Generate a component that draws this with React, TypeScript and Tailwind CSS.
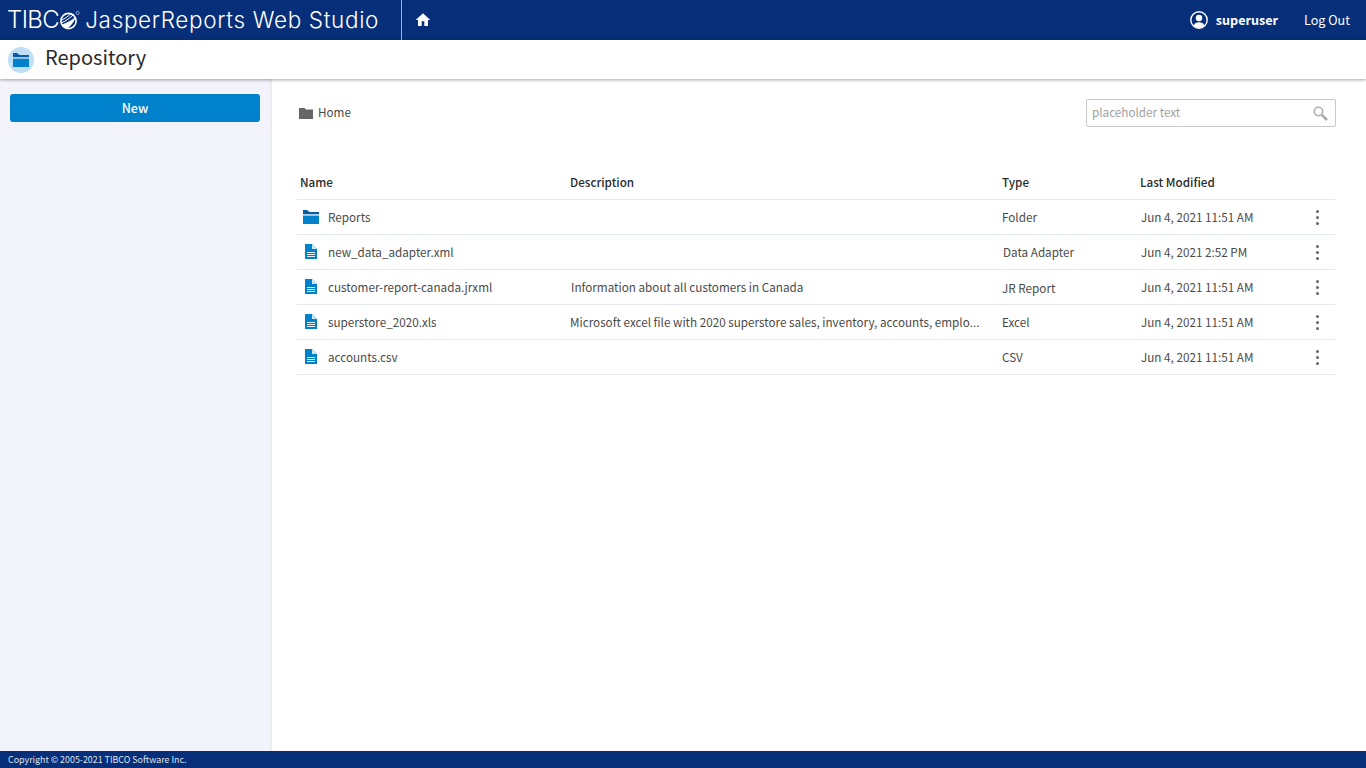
const FONT = "font-['Noto_Sans_CJK_SC','Source_Sans_Pro',sans-serif]";

interface Row {
  name: string;
  description: string;
  type: string;
  modified: string;
  descClass?: string;
  typeClass?: string;
  folder?: boolean;
}

const rows: Row[] = [
  { name: "Reports", description: "", type: "Folder", modified: "Jun 4, 2021 11:51 AM", folder: true },
  { name: "new_data_adapter.xml", description: "", type: "Data Adapter", modified: "Jun 4, 2021 2:52 PM", typeClass: "pl-px" },
  {
    name: "customer-report-canada.jrxml",
    description: "Information about all customers in Canada",
    type: "JR Report",
    modified: "Jun 4, 2021 11:51 AM",
    descClass: "pl-px",
    typeClass: "pt-0.5",
  },
  {
    name: "superstore_2020.xls",
    description: "Microsoft excel file with 2020 superstore sales, inventory, accounts, emplo...",
    type: "Excel",
    modified: "Jun 4, 2021 11:51 AM",
  },
  { name: "accounts.csv", description: "", type: "CSV", modified: "Jun 4, 2021 11:51 AM" },
];

function TibcoBall() {
  return (
    <svg viewBox="0 0 21 20" className="h-5 w-[21px] shrink-0">
      <circle cx="9.5" cy="11" r="7.6" fill="none" stroke="#fff" strokeWidth="1.6" />
      <path d="M9 18 C 13 15, 16 10, 16.6 7 C 13 10, 8 13, 3 14.5 C 4 16.5, 6 18, 9 18z" fill="#fff" />
      <path d="M3 12.5 C 7 11, 11 8, 15 4" stroke="#fff" strokeWidth="1" fill="none" />
      <path d="M2.5 10 C 6 8.5, 9 6.5, 12 3.5" stroke="#fff" strokeWidth="1" fill="none" />
      <circle cx="18.6" cy="3" r="1.6" fill="none" stroke="#fff" strokeWidth="0.5" />
    </svg>
  );
}

function FolderIcon({ className }: { className: string }) {
  return (
    <svg viewBox="0 0 16 14" className={className}>
      <path d="M0 0h4l2.5 2H16v2.4H0z" fill="#0a5aa8" />
      <path d="M0 5.4h16V14H0z" fill="#0081cb" />
      <path d="M0 4.4h16v1H0z" fill="#cfe6f6" />
    </svg>
  );
}

function FileIcon() {
  return (
    <svg viewBox="0 0 12 15" className="h-[15px] w-3">
      <path d="M0 0h7L12 5v10H0z" fill="#0081cb" />
      <path d="M7 0L12 5H7z" fill="#cfe6f6" />
      <path d="M2 8.5h8M2 10.5h8M2 12.5h8" stroke="#fff" strokeWidth="0.9" />
    </svg>
  );
}

function UserIcon() {
  return (
    <svg viewBox="0 0 18 18" className="h-[18px] w-[18px]">
      <circle cx="9" cy="9" r="8.2" fill="none" stroke="#fff" strokeWidth="1.4" />
      <circle cx="9" cy="7" r="3.2" fill="#fff" />
      <path d="M3.6 14.4c.8-2.4 3-3.2 5.4-3.2s4.6.8 5.4 3.2A8 8 0 0 1 9 17a8 8 0 0 1-5.4-2.6z" fill="#fff" />
    </svg>
  );
}

function Kebab() {
  return (
    <div className="flex flex-col items-center gap-[3px] pt-px">
      <span className="h-[3px] w-[3px] rounded-full bg-[#666]" />
      <span className="h-[3px] w-[3px] rounded-full bg-[#666]" />
      <span className="h-[3px] w-[3px] rounded-full bg-[#666]" />
    </div>
  );
}

export default function App() {
  return (
    <div className={`flex h-[768px] w-[1366px] flex-col overflow-hidden bg-white text-[11.7px] text-[#4a4a4a] ${FONT}`}>
      <header className="flex h-10 shrink-0 items-center bg-[#062e79] text-white">
        <div className="flex w-[401px] items-center pl-[7px] font-['Inter',sans-serif] font-light">
          <span className="text-[24px] leading-none tracking-[-0.6px]">TIBC</span>
          <TibcoBall />
          <span className="ml-[5px] text-[22.5px] leading-none tracking-[0.65px] whitespace-nowrap">JasperReports Web Studio</span>
        </div>
        <div className="flex h-10 items-center border-l border-[#9fb0d0] pl-[13px]">
          <svg viewBox="0 0 24 24" className="h-4 w-4" fill="#fff">
            <path d="M10 21v-7h4v7h5.5v-9H23L12 2 1 12h3.5v9z" />
          </svg>
        </div>
        <div className="ml-auto flex items-center pr-4 text-[12.6px]">
          <UserIcon />
          <span className="ml-2 font-bold">superuser</span>
          <span className="ml-[26px]">Log Out</span>
        </div>
      </header>

      <div className="z-10 flex h-[39px] shrink-0 items-center bg-white pl-2 shadow-[0_1px_3px_rgba(0,0,0,0.35)]">
        <div className="flex h-[26px] w-[26px] items-center justify-center rounded-full bg-[#bfdff5]">
          <FolderIcon className="h-[14px] w-4" />
        </div>
        <h1 className="ml-[11px] -translate-y-[3px] text-[20px] leading-none text-[#2b2b2b]">Repository</h1>
      </div>

      <div className="flex min-h-0 flex-1">
        <aside className="w-[272px] shrink-0 border-r-2 border-[#ececee] bg-[#f2f3fb] pt-[15px] pl-[10px]">
          <button className="h-7 w-[250px] rounded-[3px] bg-[#0081cb] text-[12.5px] font-medium text-white">New</button>
        </aside>

        <main className="min-w-0 flex-1 pr-[31px] pl-[25px]">
          <div className="-mr-px flex h-[48px] items-start justify-between pt-5">
            <div className="flex h-7 items-center pl-[2px] text-[#4a4a4a]">
              <svg viewBox="0 0 14 11" className="h-[11px] w-[14px]">
                <path d="M0 0h5.5l1.5 1.5h7V11H0z" fill="#666" />
              </svg>
              <span className="ml-[5px] -translate-y-px">Home</span>
            </div>
            <div className="flex h-7 w-[250px] items-center justify-between rounded-[2px] border border-[#c8c8c8] pr-[7px] pl-[5px] text-[#a0a0a0]">
              <span className="-translate-y-px">placeholder text</span>
              <svg viewBox="0 0 15 15" className="h-[15px] w-[15px]" fill="none" stroke="#aaa">
                <circle cx="5.5" cy="5.5" r="4.2" strokeWidth="1.5" />
                <path d="M8.8 8.8L14 14" strokeWidth="2.6" />
              </svg>
            </div>
          </div>

          <div className="mt-[46px] flex h-[19px] items-center pb-[1px] font-medium text-[#2b2b2b]">
            <div className="w-[273px] pl-[3px]">Name</div>
            <div className="w-[432px]">Description</div>
            <div className="w-[138px]">Type</div>
            <div>Last Modified</div>
          </div>

          <div className="mt-[7px] border-t border-[#e3e8ea]">
            {rows.map((row) => (
              <div key={row.name} className="flex h-[35px] items-center border-b border-[#e3e8ea]">
                <div className="flex w-[273px] items-center">
                  <div className="flex w-[31px] justify-center pr-[3px]">
                    {row.folder ? <FolderIcon className="h-[14px] w-4" /> : <FileIcon />}
                  </div>
                  <span>{row.name}</span>
                </div>
                <div className={`w-[432px] whitespace-nowrap ${row.descClass ?? ""}`}>{row.description}</div>
                <div className={`w-[139px] ${row.typeClass ?? ""}`}>{row.type}</div>
                <div className="w-[175px]">{row.modified}</div>
                <Kebab />
              </div>
            ))}
          </div>
        </main>
      </div>

      <footer className="flex h-[17px] shrink-0 items-center bg-[#062e79] pl-2 text-[8.9px] text-[#dfe5f0]">
        Copyright © 2005-2021 TIBCO Software Inc.
      </footer>
    </div>
  );
}
